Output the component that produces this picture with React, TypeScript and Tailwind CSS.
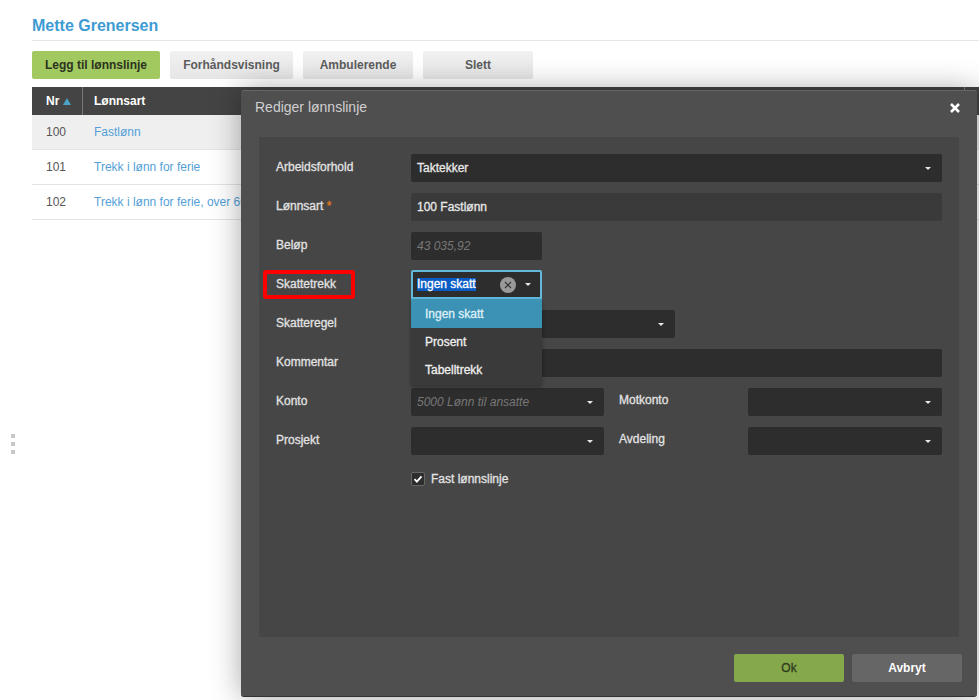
import { ReactNode } from "react";

const FONT = "font-['Liberation_Sans',Arial,sans-serif]";
const STROKE = "[-webkit-text-stroke:0.3px_currentColor]";

const ROWS = [
  { nr: "100", name: "Fastlønn", bg: "bg-[#efefef]" },
  { nr: "101", name: "Trekk i lønn for ferie", bg: "bg-white" },
  { nr: "102", name: "Trekk i lønn for ferie, over 60 år", bg: "bg-white" },
];

function Caret() {
  return <span className="h-0 w-0 border-x-[3px] border-t-[3px] border-x-transparent border-t-[#e8e8e8]" />;
}

function Label({ children, width = "w-[135px]", pad = "pb-[2px]" }: { children: ReactNode; width?: string; pad?: string }) {
  return <label className={`${width} ${pad} ${STROKE} shrink-0 text-[12px] text-[#e2e2e2]`}>{children}</label>;
}

function Select({ value, placeholder, width }: { value?: string; placeholder?: string; width: string }) {
  return (
    <div className={`${width} flex h-[28px] items-center justify-between rounded-[2px] bg-[#2d2d2d] pl-[6px] pr-[11px] text-[12px]`}>
      {value && <span className={`${STROKE} text-[#e8e8e8]`}>{value}</span>}
      {placeholder && <span className="italic text-[#777]">{placeholder}</span>}
      {!value && !placeholder && <span />}
      <Caret />
    </div>
  );
}

function TopButton({ children, width, green }: { children: ReactNode; width: string; green?: boolean }) {
  return (
    <button
      className={`${width} h-[28px] rounded-[2px] text-[12px] font-bold ${
        green ? "bg-[#a2c95f] text-[#2c3320]" : "bg-gradient-to-b from-[#f1f1f1] to-[#e6e6e6] text-[#5c5c5c]"
      }`}
    >
      {children}
    </button>
  );
}

export default function App() {
  return (
    <div className={`${FONT} relative h-[700px] w-[979px] overflow-hidden bg-white`}>
      <div className="pl-[32px] pt-[17px]">
        <h1 className="h-[24px] border-b border-[#e6e6e6] text-[16px] font-bold leading-[18px] text-[#3d9bd3]">
          Mette Grenersen
        </h1>
        <div className="mt-[10px] flex gap-[10px]">
          <TopButton width="w-[128px]" green>Legg til lønnslinje</TopButton>
          <TopButton width="w-[123px]">Forhåndsvisning</TopButton>
          <TopButton width="w-[110px]">Ambulerende</TopButton>
          <TopButton width="w-[110px]">Slett</TopButton>
        </div>
        <table className="mt-[8px] w-[947px] border-separate border-spacing-0 text-[12px]">
          <thead>
            <tr className="h-[28px] bg-[#444] text-left font-bold text-white">
              <th className="w-[51px] border-r border-[#777] pl-[14px]">
                <span className="inline-flex items-center gap-[4px]">
                  Nr
                  <span className="h-0 w-0 border-x-[4px] border-b-[7px] border-x-transparent border-b-[#4aa3c7]" />
                </span>
              </th>
              <th className="pl-[11px]">Lønnsart</th>
              <th className="w-[15px] border-l border-[#777]" />
            </tr>
          </thead>
          <tbody>
            {ROWS.map((r) => (
              <tr key={r.nr} className={`h-[35px] ${r.bg}`}>
                <td className="border-b border-[#e4e4e4] pl-[14px] text-[#555]">{r.nr}</td>
                <td colSpan={2} className="border-b border-[#e4e4e4] pl-[11px] text-[#559fd8]">{r.name}</td>
              </tr>
            ))}
          </tbody>
        </table>
      </div>

      <div className="absolute left-[11px] top-[434px] flex flex-col gap-[4px]">
        <span className="h-[4px] w-[4px] bg-[#c8c8c8]" />
        <span className="h-[4px] w-[4px] bg-[#c8c8c8]" />
        <span className="h-[4px] w-[4px] bg-[#c8c8c8]" />
      </div>

      {/* dialog */}
      <div className="absolute left-[241px] top-[90px] flex h-[607px] w-[736px] flex-col rounded-[3px] border-b border-t border-b-[#333] border-t-[#666] bg-[#4f4f4f] shadow-[0_0_30px_rgba(0,0,0,0.35)]">
        <div className="flex h-[46px] items-center justify-between pb-[13px] pl-[14px] pr-[16px]">
          <span className="text-[14px] text-[#cfcfcf]">Rediger lønnslinje</span>
          <svg width="12" height="12" viewBox="0 0 12 12">
            <path d="M2 2l8 8M10 2l-8 8" stroke="#fff" strokeWidth="2.6" />
          </svg>
        </div>

        <div className="mx-[18px] flex h-[500px] flex-col gap-[11px] rounded-[2px] bg-[#464646] px-[17px] pt-[17px]">
          <div className="flex items-center">
            <Label>Arbeidsforhold</Label>
            <Select value="Taktekker" width="w-[531px]" />
          </div>
          <div className="flex items-center">
            <Label>
              Lønnsart <span className="text-[#e2761f]">*</span>
            </Label>
            <div className={`${STROKE} flex h-[28px] w-[531px] items-center rounded-[2px] bg-[#3a3a3a] pl-[6px] text-[12px] text-[#e8e8e8]`}>
              100 Fastlønn
            </div>
          </div>
          <div className="flex items-center">
            <Label>Beløp</Label>
            <div className="flex h-[28px] w-[131px] items-center rounded-[2px] bg-[#2d2d2d] pl-[6px] text-[12px] italic text-[#777]">
              43 035,92
            </div>
          </div>
          <div className="flex h-[28px] items-center">
            <div className="relative flex h-[28px] w-[135px] shrink-0 items-center">
              <Label>Skattetrekk</Label>
              <div className="absolute left-[-13px] top-[-1px] h-[29px] w-[92px] rounded-[3px] border-[4px] border-[#ff0000]" />
            </div>
            <div className="relative mb-[1px]">
              <div className="flex h-[29px] w-[131px] items-center justify-between rounded-t-[2px] border-2 border-[#62b9dc] bg-[#2d2d2d] pl-[4px] pr-[9px] text-[12px]">
                <span className={`${STROKE} inline-block bg-[#0a5bc4] leading-[13px] text-white`}>Ingen skatt</span>
                <div className="flex items-center gap-[9px]">
                  <span className="flex h-[16px] w-[16px] items-center justify-center rounded-full bg-[#999]">
                    <svg width="8" height="8" viewBox="0 0 8 8">
                      <path d="M1 1l6 6M7 1L1 7" stroke="#333" strokeWidth="1.2" />
                    </svg>
                  </span>
                  <Caret />
                </div>
              </div>
              <ul className={`${STROKE} absolute left-0 top-[29px] z-10 w-[131px] bg-[#3a3a3a] pb-[1px] text-[12px] text-[#f0f0f0] shadow-[0_2px_4px_rgba(0,0,0,0.3)]`}>
                <li className="flex h-[29px] items-center bg-[#3b92b5] pl-[14px] text-[#dff0f6]">Ingen skatt</li>
                <li className="flex h-[28px] items-center pl-[14px]">Prosent</li>
                <li className="flex h-[28px] items-center pl-[14px]">Tabelltrekk</li>
              </ul>
            </div>
          </div>
          <div className="flex items-center">
            <Label>Skatteregel</Label>
            <Select width="w-[264px]" />
          </div>
          <div className="flex items-center">
            <Label>Kommentar</Label>
            <div className="h-[28px] w-[531px] rounded-[2px] bg-[#2d2d2d]" />
          </div>
          <div className="flex items-center">
            <Label>Konto</Label>
            <Select placeholder="5000 Lønn til ansatte" width="w-[193px]" />
            <div className="ml-[15px] flex w-[129px] shrink-0">
              <Label width="w-[129px]" pad="pb-[4px]">Motkonto</Label>
            </div>
            <Select width="w-[194px]" />
          </div>
          <div className="flex items-center">
            <Label>Prosjekt</Label>
            <Select width="w-[193px]" />
            <div className="ml-[15px] flex w-[129px] shrink-0">
              <Label width="w-[129px]" pad="pb-[4px]">Avdeling</Label>
            </div>
            <Select width="w-[194px]" />
          </div>
          <div className="ml-[135px] mt-[4px] flex items-center gap-[6px]">
            <span className="flex h-[14px] w-[14px] items-center justify-center rounded-[2px] border border-[#666] bg-[#2d2d2d]">
              <svg width="10" height="10" viewBox="0 0 10 10">
                <path d="M1.5 5.2l2.4 2.4 4.6-5.2" fill="none" stroke="#fff" strokeWidth="1.8" />
              </svg>
            </span>
            <span className={`${STROKE} text-[12px] text-[#e2e2e2]`}>Fast lønnslinje</span>
          </div>
        </div>

        <div className="flex flex-1 items-center justify-end gap-[8px] pr-[15px] pt-[2px]">
          <button className={`${STROKE} h-[28px] w-[110px] rounded-[2px] bg-[#84a84a] text-[12px] text-[#2f3a1f]`}>Ok</button>
          <button className="h-[28px] w-[110px] rounded-[2px] bg-[#666] text-[12px] font-bold text-white">Avbryt</button>
        </div>
      </div>
    </div>
  );
}
